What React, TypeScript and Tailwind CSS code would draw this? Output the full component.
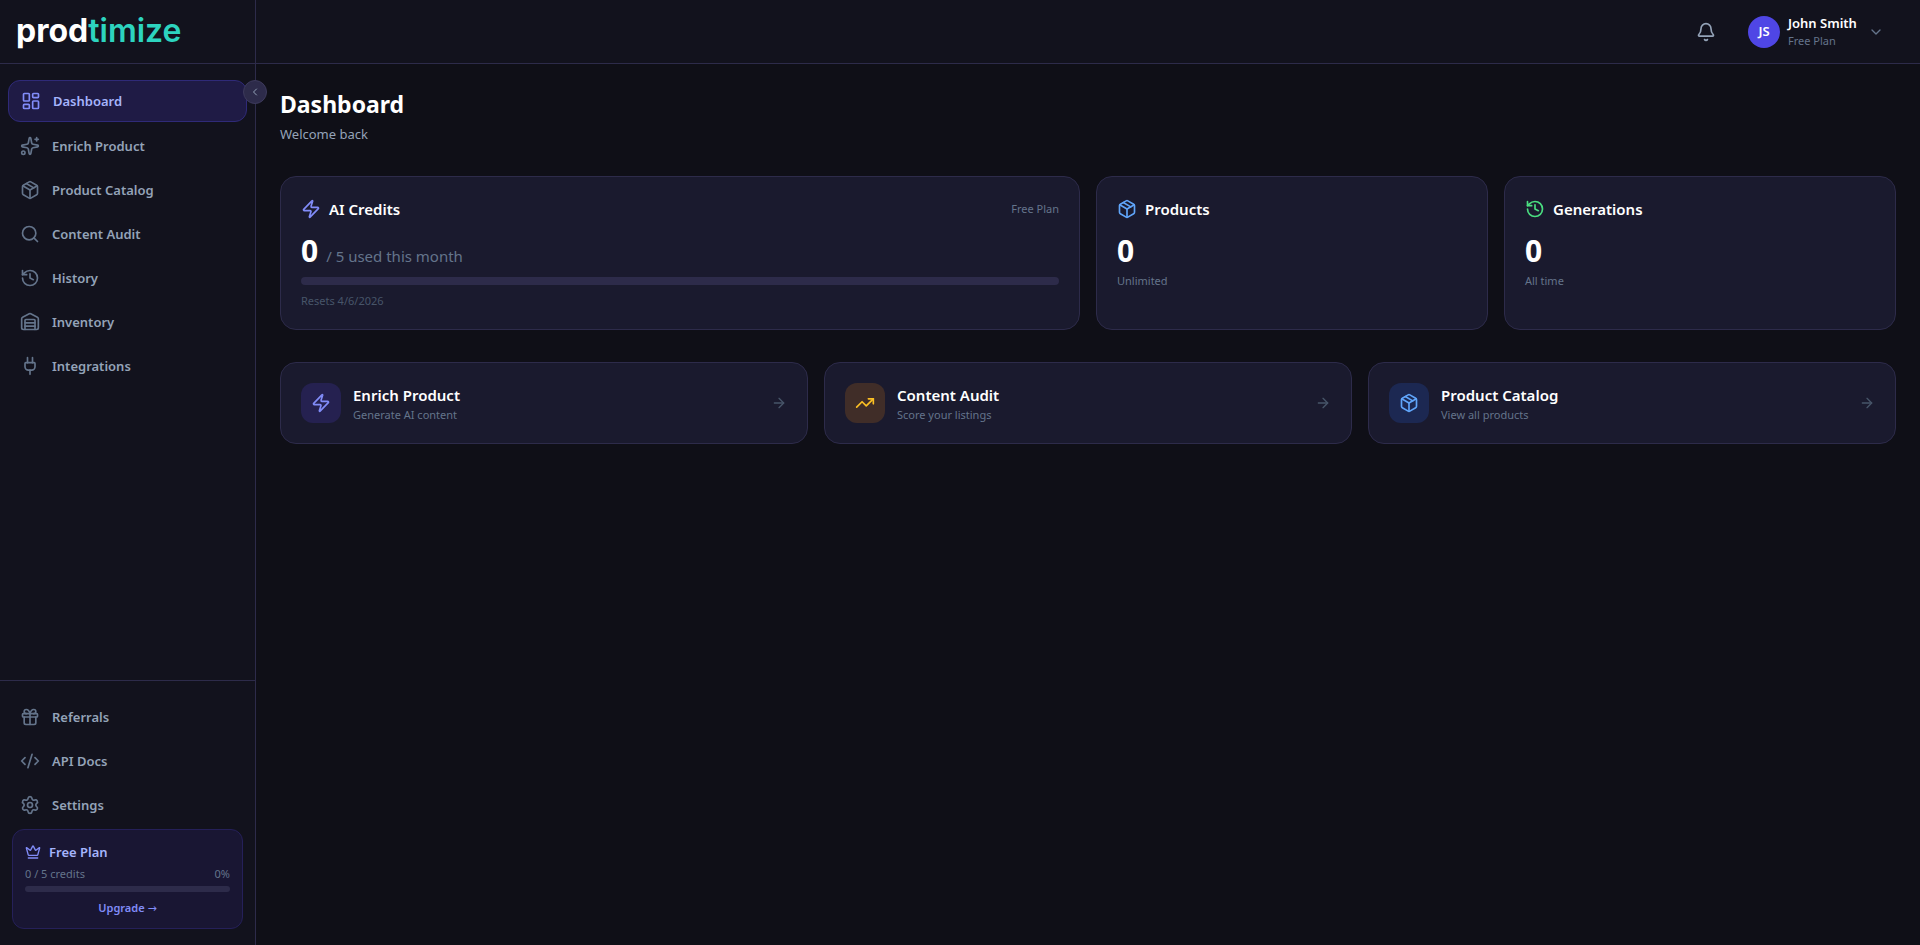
import { useState } from "react";
import {
  ArrowRight,
  Bell,
  ChevronDown,
  ChevronLeft,
  CodeXml,
  Crown,
  Gift,
  History,
  LayoutDashboard,
  Package,
  Plug,
  Search,
  Settings,
  Sparkles,
  TrendingUp,
  Warehouse,
  Zap,
  type LucideIcon,
} from "lucide-react";
import clsx from "clsx";

interface NavItem {
  label: string;
  icon: LucideIcon;
}

const MAIN_NAV: NavItem[] = [
  { label: "Dashboard", icon: LayoutDashboard },
  { label: "Enrich Product", icon: Sparkles },
  { label: "Product Catalog", icon: Package },
  { label: "Content Audit", icon: Search },
  { label: "History", icon: History },
  { label: "Inventory", icon: Warehouse },
  { label: "Integrations", icon: Plug },
];

const FOOTER_NAV: NavItem[] = [
  { label: "Referrals", icon: Gift },
  { label: "API Docs", icon: CodeXml },
  { label: "Settings", icon: Settings },
];

const QUICK_ACTIONS = [
  { title: "Enrich Product", text: "Generate AI content", icon: Zap, tone: "bg-[#252150] text-[#818cf8]" },
  { title: "Content Audit", text: "Score your listings", icon: TrendingUp, tone: "bg-[#402d28] text-[#fbbf24]" },
  { title: "Product Catalog", text: "View all products", icon: Package, tone: "bg-[#1c2852] text-[#60a5fa]" },
];

const CREDITS = { used: 0, total: 5 };

function ProgressBar({ label, className }: { label: string; className: string }) {
  const percent = (CREDITS.used / CREDITS.total) * 100;
  return (
    <div
      role="progressbar"
      aria-label={label}
      aria-valuenow={percent}
      className={clsx("overflow-hidden rounded-full bg-[#2d2b4a]", className)}
    >
      <div className="h-full rounded-full bg-[#6366f1]" style={{ width: `${percent}%` }} />
    </div>
  );
}

function NavLink({ item, active, onSelect }: { item: NavItem; active: boolean; onSelect: () => void }) {
  const Icon = item.icon;
  return (
    <a
      href="#"
      onClick={onSelect}
      aria-current={active ? "page" : undefined}
      className={clsx(
        "flex items-center gap-3 rounded-xl px-3 py-[10px] text-[13px] leading-5 font-semibold",
        active ? "border border-[#2f2a78] bg-[#1f1b45] text-[#a5b4fc]" : "text-[#94a3b8] hover:bg-white/5"
      )}
    >
      <Icon className={clsx("size-5", active ? "text-[#818cf8]" : "text-[#64748b]")} />
      {item.label}
    </a>
  );
}

function Sidebar() {
  const [current, setCurrent] = useState("Dashboard");

  const renderItem = (item: NavItem) => (
    <NavLink
      key={item.label}
      item={item}
      active={current === item.label}
      onSelect={() => setCurrent(item.label)}
    />
  );

  return (
    <aside className="relative flex w-64 shrink-0 flex-col border-r border-[#2d2b4a] bg-[#12121d]">
      <div className="flex h-16 items-center border-b border-[#2d2b4a] px-4">
        <a href="#" className="pb-[2px] font-['Inter'] text-[32px] leading-10 text-white">
          <span className="font-bold">prod</span>
          <span className="font-semibold text-[#2dd4bf]">timize</span>
        </a>
      </div>

      <button
        type="button"
        aria-label="Collapse sidebar"
        className="absolute top-20 -right-3 flex size-6 items-center justify-center rounded-full border border-[#3d3a5c] bg-[#2d2b4a] text-[#94a3b8]"
      >
        <ChevronLeft className="size-3" />
      </button>

      <nav aria-label="Main" className="flex flex-1 flex-col gap-1 px-2 py-4">
        {MAIN_NAV.map(renderItem)}
      </nav>

      <div className="flex flex-col gap-1 border-t border-[#2d2b4a] px-2 py-4">
        {FOOTER_NAV.map(renderItem)}
        <div className="mx-1 rounded-xl border border-[#252059] bg-[#191633] p-3">
          <div className="mb-1 flex items-center gap-2 text-[13px] leading-5 font-semibold text-[#a5b4fc]">
            <Crown className="size-4 text-[#818cf8]" />
            Free Plan
          </div>
          <div className="mb-1 flex justify-between text-[11px] leading-4 text-[#64748b]">
            <span>
              {CREDITS.used} / {CREDITS.total} credits
            </span>
            <span>0%</span>
          </div>
          <ProgressBar label="Plan credits" className="h-[6px]" />
          <a href="#" className="mt-2 block text-center text-[11px] leading-4 font-semibold text-[#818cf8]">
            Upgrade <span className="font-['DejaVu_Sans'] leading-none font-normal">→</span>
          </a>
        </div>
      </div>
    </aside>
  );
}

function Header() {
  return (
    <header className="flex h-16 items-center justify-end gap-3 border-b border-[#2d2b4a] bg-[#12121d] px-6">
      <button type="button" aria-label="Notifications" className="p-2 text-[#94a3b8]">
        <Bell className="size-5" />
      </button>
      <button type="button" className="flex items-center gap-2 px-3 text-left">
        <span className="flex size-8 items-center justify-center rounded-full bg-[#4f46e5] text-[13px] font-semibold text-white">
          JS
        </span>
        <span className="flex min-w-18 flex-col pb-[2px]">
          <span className="text-[13px] leading-5 font-semibold text-white">John Smith</span>
          <span className="text-[11px] leading-4 text-[#64748b]">Free Plan</span>
        </span>
        <ChevronDown className="size-4 text-[#64748b]" />
      </button>
    </header>
  );
}

function CardTitle({ icon: Icon, color, children }: { icon: LucideIcon; color: string; children: string }) {
  return (
    <h2 className="flex items-center gap-2 text-[15px] leading-6 font-semibold text-white">
      <Icon className={clsx("size-5", color)} />
      {children}
    </h2>
  );
}

function StatCard({ icon, color, title, note }: { icon: LucideIcon; color: string; title: string; note: string }) {
  return (
    <section className="rounded-2xl border border-[#2d2b4a] bg-[#1a1a2e] p-5">
      <CardTitle icon={icon} color={color}>
        {title}
      </CardTitle>
      <p className="mt-3 text-[30px] leading-9 font-bold text-white">0</p>
      <p className="mt-1 text-[11px] leading-4 text-[#64748b]">{note}</p>
    </section>
  );
}

export default function App() {
  return (
    <div className="flex min-h-screen bg-[#0f0f17] font-['Segoe_UI','Noto_Sans',sans-serif]">
      <Sidebar />
      <div className="flex min-w-0 flex-1 flex-col">
        <Header />
        <main className="flex-1 p-6">
          <h1 className="text-[23px] leading-8 font-bold text-white">Dashboard</h1>
          <p className="mt-1 text-[13px] leading-5 text-[#94a3b8]">Welcome back</p>

          <div className="mt-8 grid grid-cols-4 gap-4">
            <section className="col-span-2 rounded-2xl border border-[#2d2b4a] bg-[#1a1a2e] p-5">
              <div className="flex items-center justify-between">
                <CardTitle icon={Zap} color="text-[#818cf8]">
                  AI Credits
                </CardTitle>
                <span className="text-[11px] leading-4 text-[#64748b]">Free Plan</span>
              </div>
              <p className="mt-3 flex items-baseline gap-2 text-[30px] leading-9 font-bold text-white">
                {CREDITS.used}
                <span className="text-[15px] leading-6 font-normal text-[#64748b]">
                  / {CREDITS.total} used this month
                </span>
              </p>
              <ProgressBar label="AI credits used" className="mt-2 h-2" />
              <p className="mt-2 text-[11px] leading-4 text-[#475569]">Resets 4/6/2026</p>
            </section>
            <StatCard icon={Package} color="text-[#60a5fa]" title="Products" note="Unlimited" />
            <StatCard icon={History} color="text-[#4ade80]" title="Generations" note="All time" />
          </div>

          <div className="mt-8 grid grid-cols-3 gap-4">
            {QUICK_ACTIONS.map(({ title, text, icon: Icon, tone }) => (
              <a
                key={title}
                href="#"
                className="flex items-center gap-3 rounded-2xl border border-[#2d2b4a] bg-[#1a1a2e] p-5"
              >
                <span className={clsx("flex size-10 items-center justify-center rounded-xl", tone)}>
                  <Icon className="size-5" />
                </span>
                <span className="flex flex-1 flex-col">
                  <span className="text-[15px] leading-6 font-semibold text-white">{title}</span>
                  <span className="text-[11px] leading-4 text-[#64748b]">{text}</span>
                </span>
                <ArrowRight className="size-4 text-[#475569]" />
              </a>
            ))}
          </div>
        </main>
      </div>
    </div>
  );
}
